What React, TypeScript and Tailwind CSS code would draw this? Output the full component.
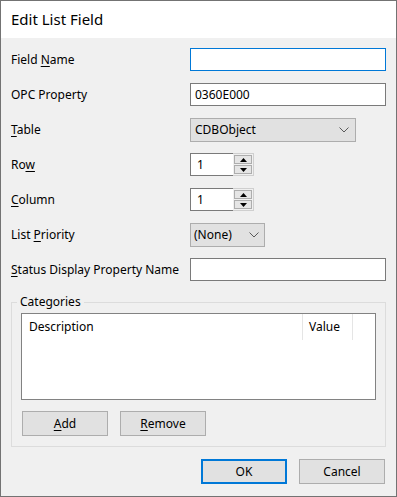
import React from "react";

const font = { fontFamily: '"Noto Sans", "Open Sans", sans-serif' };

const Chevron = () => (
  <svg width="10" height="6" viewBox="0 0 10 6" className="shrink-0">
    <polyline points="0.5,0.5 5,5 9.5,0.5" fill="none" stroke="#5a5a5a" strokeWidth="1" />
  </svg>
);

const Tri = ({ up }: { up?: boolean }) => (
  <svg width="7" height="4" viewBox="0 0 7 4">
    <polygon points={up ? "3.5,0 7,4 0,4" : "0,0 7,0 3.5,4"} fill="#000" />
  </svg>
);

const Spinner = () => (
  <div className="flex h-[23px]">
    <div className="w-[43px] h-full border border-r-0 border-[#7a7a7a] bg-white pl-[6px] flex items-center text-[12px]">
      1
    </div>
    <div className="w-[21px] h-full flex flex-col gap-px p-px border border-[#cfcfcf] border-l-0 bg-[#f0f0f0]">
      <div className="flex-1 flex items-center justify-center bg-[#e5e5e5] border border-[#adadad]">
        <Tri up />
      </div>
      <div className="flex-1 flex items-center justify-center bg-[#e5e5e5] border border-[#adadad]">
        <Tri />
      </div>
    </div>
  </div>
);

const Row = ({ label, children }: { label: React.ReactNode; children: React.ReactNode }) => (
  <div className="flex h-[35px]">
    <div className="w-[179px] h-[23px] flex items-center text-[12px] text-black pt-px">
      <span className="whitespace-pre">{label}</span>
    </div>
    {children}
  </div>
);

const Btn = ({ children, primary }: { children: React.ReactNode; primary?: boolean }) => (
  <button
    className={
      "w-[86px] h-[25px] flex items-center justify-center text-[12px] text-black bg-[#e1e1e1] " +
      (primary ? "border-2 border-[#0078d7]" : "border border-[#adadad]")
    }
  >
    <span className="whitespace-pre">{children}</span>
  </button>
);

const U = ({ children }: { children: React.ReactNode }) => (
  <span className="underline underline-offset-2 decoration-1">{children}</span>
);

export default function App() {
  return (
    <div style={font} className="w-[397px] h-[497px] border border-[#737373] bg-[#f0f0f0] flex flex-col text-black">
      <div className="h-[37px] bg-white flex items-center pl-[10px] text-[15px]">Edit List Field</div>

      <div className="pt-[10px] pl-[10px] pr-[10px] flex flex-col">
        <Row label={<>Field <U>N</U>ame</>}>
          <div className="w-[196px] h-[23px] bg-white border border-[#0078d7]" />
        </Row>
        <Row label="OPC Property">
          <div className="w-[196px] h-[23px] bg-white border border-[#7a7a7a] pl-[4px] flex items-center text-[12px]">
            0360E000
          </div>
        </Row>
        <Row label={<><U>T</U>able</>}>
          <div className="w-[166px] h-[24px] bg-[#e1e1e1] border border-[#adadad] pl-[4px] pr-[6px] flex items-center justify-between text-[12px]">
            <span>CDBObject</span>
            <Chevron />
          </div>
        </Row>
        <Row label={<>Ro<U>w</U></>}>
          <Spinner />
        </Row>
        <Row label={<><U>C</U>olumn</>}>
          <Spinner />
        </Row>
        <Row label={<>List <U>P</U>riority</>}>
          <div className="w-[75px] h-[24px] bg-[#e1e1e1] border border-[#adadad] pl-[3px] pr-[5px] flex items-center justify-between text-[12px]">
            <span>(None)</span>
            <Chevron />
          </div>
        </Row>
        <Row label={<><U>S</U>tatus Display Property Name</>}>
          <div className="w-[196px] h-[23px] bg-white border border-[#7a7a7a]" />
        </Row>

        <div className="relative mt-[9px] w-[375px] h-[145px] border border-[#dcdcdc] pt-[10px] px-[9px] flex flex-col">
          <span className="absolute -top-[10px] left-[5px] bg-[#f0f0f0] px-[3px] text-[12px] leading-[18px]">
            Categories
          </span>
          <div className="w-[355px] h-[87px] bg-white border border-[#828282] flex flex-col">
            <div className="flex h-[26px] text-[12px]">
              <div className="w-[281px] pl-[7px] flex items-center border-r border-[#e5e5e5]">Description</div>
              <div className="w-[50px] pl-[6px] flex items-center border-r border-[#e5e5e5]">Value</div>
            </div>
          </div>
          <div className="flex gap-[12px] mt-[11px] ml-px">
            <Btn><U>A</U>dd</Btn>
            <Btn><U>R</U>emove</Btn>
          </div>
        </div>

        <div className="flex justify-end gap-[12px] mt-[12px] pr-px">
          <Btn primary>OK</Btn>
          <Btn>Cancel</Btn>
        </div>
      </div>
    </div>
  );
}
